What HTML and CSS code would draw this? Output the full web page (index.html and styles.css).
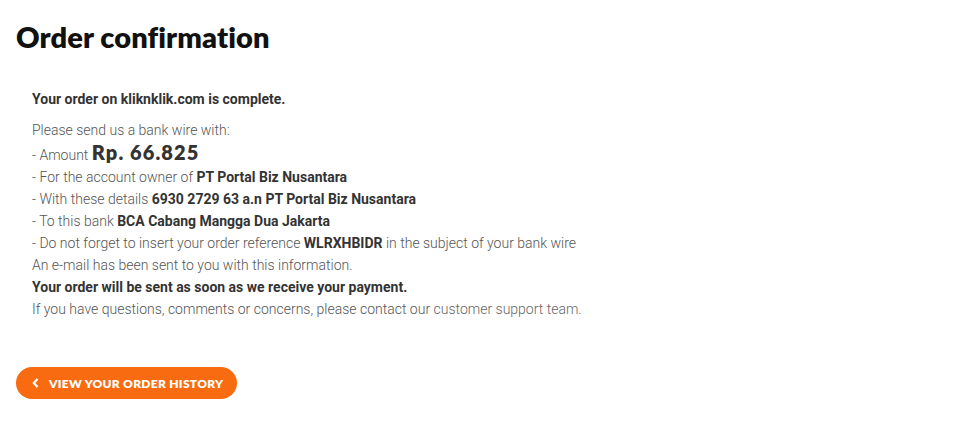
FILE: index.html
```html
<!DOCTYPE html>
<html>
<head>
<meta charset="utf-8">
<link rel="stylesheet" href="styles.css">
</head>
<body>
<h1 class="title">Order confirmation</h1>
<div class="box">
  <p class="strong lead">Your order on kliknklik.com is complete.</p>
  <p class="lines">
    Please send us a bank wire with:<br>
    - Amount <span class="price">Rp. 66.825</span><br>
    - For the account owner of <strong>PT Portal Biz Nusantara</strong><br>
    - With these details <strong>6930 2729 63 a.n PT Portal Biz Nusantara</strong><br>
    - To this bank <strong>BCA Cabang Mangga Dua Jakarta</strong><br>
    - Do not forget to insert your order reference <strong>WLRXHBIDR</strong> in the subject of your bank wire<br>
    An e-mail has been sent to you with this information.<br>
    <strong>Your order will be sent as soon as we receive your payment.</strong><br>
    If you have questions, comments or concerns, please contact our <a class="link" href="#">customer support team</a>.
  </p>
</div>
<div class="actions">
  <a class="btn" href="#"><svg class="chev" width="7" height="10" viewBox="0 0 7 10"><path d="M5.5 1 L1.8 5 L5.5 9" fill="none" stroke="#fff" stroke-width="2.2"/></svg><span>View your order history</span></a>
</div>
</body>
</html>
```
FILE: styles.css
```css
body {
  margin: 0;
  padding: 0 16px;
  background: #fff;
  font-family: Roboto, "Liberation Sans", sans-serif;
  color: #555;
}
.title {
  margin: 19px 0 0;
  font-family: "Lato", "Open Sans", sans-serif;
  font-weight: 800;
  font-size: 29px;
  line-height: 36px;
  color: #111;
  letter-spacing: 0.1px;
}
.box {
  padding: 33px 16px 0;
  font-size: 14px;
  font-weight: 300;
  line-height: 22px;
}
.box p { margin: 0; }
.strong, strong {
  font-weight: 700;
  color: #333;
}
.lead { margin-bottom: 9px !important; }
.price {
  font-family: "Lato", sans-serif;
  font-weight: 800;
  font-size: 20px;
  color: #333;
  letter-spacing: 1.1px;
}
.link { color: #666; text-decoration: none; }
.actions { padding-top: 47px; }
.btn {
  display: inline-flex;
  align-items: center;
  gap: 10px;
  height: 32px;
  padding: 0 14px 0 16px;
  border-radius: 16px;
  background: #f96b10;
  color: #fff;
  text-decoration: none;
  text-transform: uppercase;
  font-family: "Lato", sans-serif;
  font-weight: 800;
  font-size: 12px;
  letter-spacing: 0.3px;
}
```
